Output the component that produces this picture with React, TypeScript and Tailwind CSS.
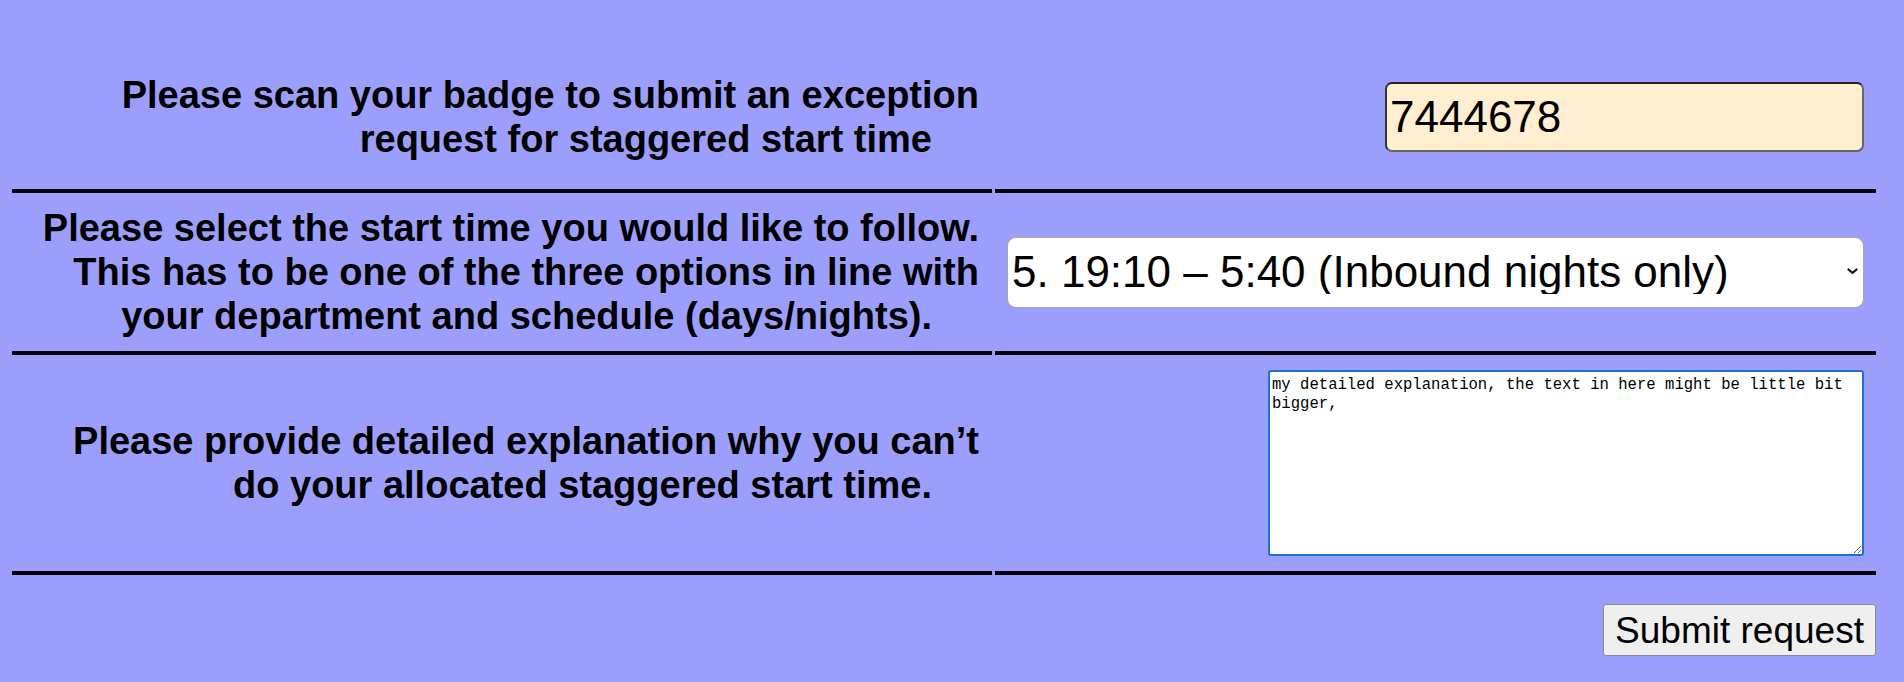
import React from "react";

function Label({ text }: { text: string }) {
  return (
    <div className="max-w-[948px] text-right text-[38px] font-bold leading-[44px]">
      {text}
      <span className="inline-block w-[47px]" />
    </div>
  );
}

export default function App() {
  return (
    <main className="min-h-screen w-full bg-[#9b9ffb] font-['Liberation_Sans',Arial,sans-serif] text-black">
      <div className="pl-[12px] pr-[28px] pt-[45px]">
        {/* badge row */}
        <div className="flex h-[148px] gap-[3px]">
          <div className="flex w-[980px] items-center justify-end border-b-4 border-black pr-[13px]">
            <Label text="Please scan your badge to submit an exception request for staggered start time" />
          </div>
          <div className="flex flex-1 items-center justify-end border-b-4 border-black px-[12px]">
            <input
              defaultValue="7444678"
              className="h-[70px] w-[479px] rounded-[7px] border-2 border-t-[#222] border-l-[#333] border-r-[#666] border-b-[#666] bg-[#ffeecf] pl-[3px] text-[44px] leading-none outline-none"
            />
          </div>
        </div>

        {/* start time row */}
        <div className="flex h-[162px] gap-[3px]">
          <div className="flex w-[980px] items-center justify-end border-b-4 border-black pr-[13px]">
            <Label text="Please select the start time you would like to follow. This has to be one of the three options in line with your department and schedule (days/nights)." />
          </div>
          <div className="flex flex-1 items-center border-b-4 border-black px-[12px]">
            <div className="relative w-full">
              <select
                defaultValue="5"
                className="h-[71px] w-full appearance-none rounded-[9px] border border-[#a8a8a8] bg-white pl-[4px] text-[44px] leading-none outline-none"
              >
                <option value="5">5. 19:10 – 5:40 (Inbound nights only)</option>
              </select>
              <svg
                className="pointer-events-none absolute right-[6px] top-[31px] h-[7px] w-[11px]"
                viewBox="0 0 11 7"
                fill="none"
              >
                <path d="M1.5 1.5 L5.5 5 L9.5 1.5" stroke="#111" strokeWidth="2.2" strokeLinecap="round" strokeLinejoin="round" />
              </svg>
            </div>
          </div>
        </div>

        {/* explanation row */}
        <div className="flex h-[220px] gap-[3px]">
          <div className="flex w-[980px] items-center justify-end border-b-4 border-black pr-[13px]">
            <Label text="Please provide detailed explanation why you can’t do your allocated staggered start time." />
          </div>
          <div className="flex flex-1 items-center justify-end border-b-4 border-black px-[12px]">
            <textarea
              defaultValue="my detailed explanation, the text in here might be little bit bigger,"
              className="h-[186px] w-[596px] rounded-[3px] border-2 border-[#1f6fd8] bg-white px-[2px] py-[4px] font-['Liberation_Mono','Courier_New',monospace] text-[15.6px] leading-[19px] outline-none"
            />
          </div>
        </div>

        <div className="flex justify-end pt-[29px]">
          <button className="h-[52px] w-[273px] whitespace-nowrap rounded-[3px] border border-[#8a8a8a] bg-[#efefef] px-0 text-[37px] leading-none">
            Submit request
          </button>
        </div>
      </div>
    </main>
  );
}
